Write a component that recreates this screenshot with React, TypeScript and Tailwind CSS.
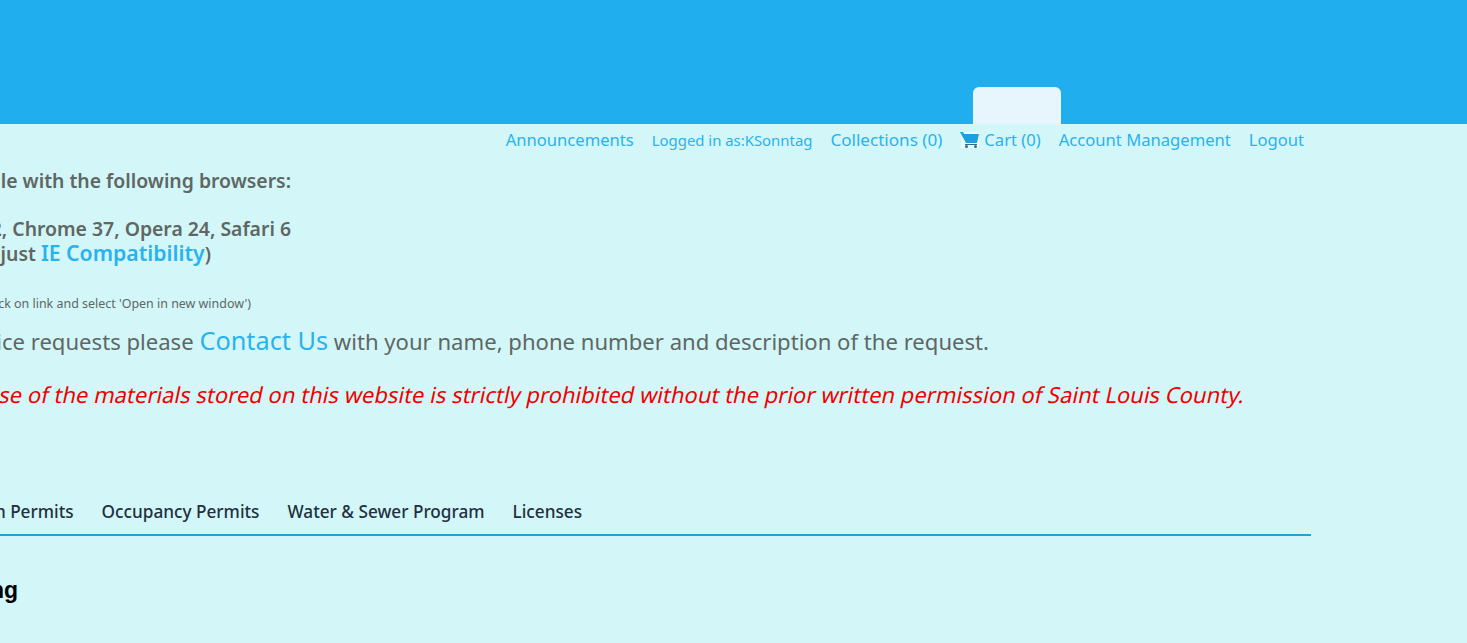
const navLink = 'text-[#29b2f0] text-[16.6px] leading-6 whitespace-nowrap';

function CartIcon() {
    return (
        <svg width="20" height="20" viewBox="0 0 20 20" className="mr-[4px]">
            <rect x="1" y="2" width="18" height="16" fill="#eefbfd" />
            <path d="M0 2h3l1 2h15l-2 9H6z" fill="#1e9fe0" />
            <path d="M5 14.5h12" stroke="#2b6f94" strokeWidth="1" />
            <circle cx="6.5" cy="16.5" r="1.5" fill="#2b6f94" />
            <circle cx="15.5" cy="16.5" r="1.5" fill="#2b6f94" />
        </svg>
    );
}

function TopNav() {
    return (
        <div className="flex justify-end items-center gap-[18px] w-[1304px] h-[32px]">
            <a className={navLink}>Announcements</a>
            <span className="text-[#29b2f0] text-[14.9px] leading-6 whitespace-nowrap">Logged in as:KSonntag</span>
            <a className="text-[#29b2f0] text-[17.1px] leading-6 whitespace-nowrap">Collections (0)</a>
            <a className={`${navLink} flex items-center`}>
                <CartIcon />
                Cart (0)
            </a>
            <a className={navLink}>Account Management</a>
            <a className={navLink}>Logout</a>
        </div>
    );
}

export default function App() {
    return (
        <div className="h-[643px] w-[1467px] overflow-hidden bg-[#d3f7f8] font-['Noto_Sans','Open_Sans',sans-serif]">
            {/* Header band with the empty active tab */}
            <div className="h-[124px] bg-[#21aeef] flex items-end pl-[973px]">
                <div className="w-[88px] h-[37px] bg-[#e6f6fc] rounded-t-[6px]" />
            </div>

            <TopNav />

            {/* Notices, cut off by the left edge of the window */}
            <div className="pt-[13px] font-semibold text-[#5f6664] text-[19.4px] leading-6">
                <div className="flex justify-end w-[291px] whitespace-nowrap">This site is compatible with the following browsers:</div>
                <div className="h-6" />
                <div className="flex justify-end w-[291px] whitespace-nowrap">Internet Explorer 11, Firefox 32, Chrome 37, Opera 24, Safari 6</div>
                <div className="flex justify-end items-baseline w-[211px] h-6 whitespace-nowrap">
                    <span>(If having problems adjust&nbsp;</span>
                    <a className="text-[#29b2f0] text-[21.2px] leading-6">IE Compatibility</a>
                    <span>)</span>
                </div>
            </div>

            <div className="flex justify-end w-[251px] mt-[31px] text-[12.45px] leading-[16px] text-[#5f6664] whitespace-nowrap">
                (To open in a new window right click on link and select 'Open in new window')
            </div>

            <div className="flex justify-end items-baseline w-[989px] mt-[12px] h-8 text-[22.1px] leading-[32px] text-[#5f6664] whitespace-nowrap">
                <span>For questions, comments or service requests please&nbsp;</span>
                <a className="text-[#29b2f0] text-[25.3px]">Contact Us</a>
                <span>&nbsp;with your name, phone number and description of the request.</span>
            </div>

            <div className="flex justify-end w-[1245px] mt-[22px] text-[22px] leading-[32px] text-[#f00000] whitespace-nowrap">
                <span className="inline-block -skew-x-12">
                    Any unauthorized use of the materials stored on this website is strictly prohibited without the prior written permission of Saint Louis County.
                </span>
            </div>

            {/* Tab strip */}
            <div className="w-[1311px] h-[50px] mt-[76px] border-b-2 border-[#2a9fd6] flex justify-end items-center gap-[28px] pr-[729px] pt-[3px] text-[17.2px] font-medium text-[#1f3040] whitespace-nowrap">
                <a>Inspection Permits</a>
                <a>Occupancy Permits</a>
                <a>Water &amp; Sewer Program</a>
                <a>Licenses</a>
            </div>

            <div className="flex justify-end w-[18px] mt-[38px] text-[23px] leading-8 font-bold font-['Liberation_Sans',sans-serif] text-black whitespace-nowrap">
                Permitting
            </div>
        </div>
    );
}
